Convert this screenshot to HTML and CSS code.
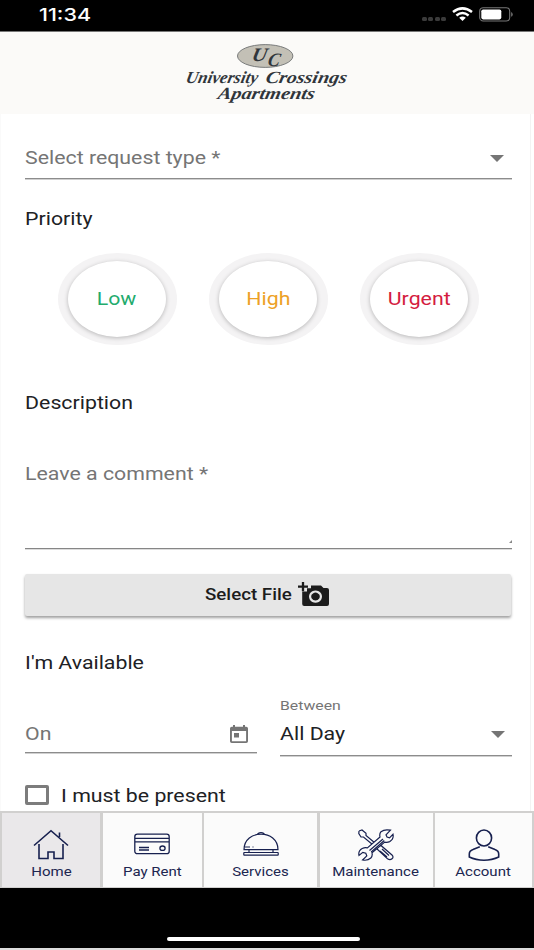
FILE: index.html
```html
<!DOCTYPE html>
<html lang="en">
<head>
<meta charset="utf-8">
<title>Maintenance request</title>
<link rel="stylesheet" href="styles.css">
</head>
<body>
<div class="status">
  <span class="time">11:34</span>
  <div class="signals">
    <div class="dots"><i></i><i></i><i></i><i></i></div>
    <svg class="wifi" viewBox="0 0 21 14" preserveAspectRatio="none"><g fill="none" stroke="#fff" stroke-width="2.5"><path d="M1 5Q10.500-2.300 20 5"/><path d="M4.400 8.400Q10.500 3.600 16.600 8.400"/></g><path d="M7.200 10.700Q10.500 8.300 13.800 10.700L10.500 14Z" fill="#fff"/></svg>
    <svg class="battery" viewBox="0 0 34 15"><rect x=".7" y=".7" width="30" height="13.300" rx="3.500" fill="none" stroke="#777" stroke-width="1.100"/><rect x="2.300" y="2.400" width="20" height="10" rx="1.800" fill="#fff"/><path d="M32.200 5v4.800q1.500-.6 1.500-2.400t-1.500-2.400" fill="#777"/></svg>
  </div>
</div>
<header class="brand">
  <svg class="logo" viewBox="0 0 170 64" role="img" aria-label="University Crossings Apartments">
    <ellipse cx="84.200" cy="16" rx="27.700" ry="11.400" fill="#c3c0b6" stroke="#6d6f70" stroke-width=".9"/>
    <g class="script">
      <text class="initial" transform="translate(70 20.500) skewX(-12)" textLength="15" lengthAdjust="spacingAndGlyphs">U</text>
      <text class="initial" transform="translate(86 25.500) skewX(-12)" textLength="12" lengthAdjust="spacingAndGlyphs">C</text>
      <text transform="translate(4 42.500) skewX(-12)" textLength="72" lengthAdjust="spacingAndGlyphs">University</text>
      <text transform="translate(84 42.500) skewX(-12)" textLength="81" lengthAdjust="spacingAndGlyphs">Crossings</text>
      <text transform="translate(36 58.500) skewX(-12)" textLength="97" lengthAdjust="spacingAndGlyphs">Apartments</text>
    </g>
  </svg>
</header>
<main class="form">
  <div class="field request"><span class="t muted">Select request type *</span><svg class="arrow" viewBox="0 0 14 7"><path d="M0 0h14L7 7z"/></svg></div>
  <h2 class="priority-title"><span class="t">Priority</span></h2>
  <div class="priorities">
    <button class="ring"><span class="disc low"><span class="t mid">Low</span></span></button>
    <button class="ring"><span class="disc high"><span class="t mid">High</span></span></button>
    <button class="ring"><span class="disc urgent"><span class="t mid">Urgent</span></span></button>
  </div>
  <h2 class="description-title"><span class="t">Description</span></h2>
  <div class="comment"><span class="t muted">Leave a comment *</span><svg class="grip" viewBox="0 0 3 3"><path d="M0 3L3 0v3z"/></svg></div>
  <button class="file"><span class="t">Select File</span>
    <svg viewBox="0 0 31 25"><path fill="#1c1c1c" fill-rule="evenodd" d="M4.200 9.500H9V6.300h4V3.500h10L25.500 6H29q2 0 2 2v14q0 2-2 2H6.200q-2 0-2-2zM17.500 8.400a6.500 6.200 0 1 0 .01 0zm0 2.200a4.300 4 0 1 1-.01 0z"/><path d="M5 0v9.300M0 4.600h10" stroke="#1c1c1c" stroke-width="2.300"/></svg>
  </button>
  <h2 class="available-title"><span class="t">I'm Available</span></h2>
  <div class="when">
    <div class="field date"><span class="t muted">On</span>
      <svg class="calendar" viewBox="0 0 18 18" preserveAspectRatio="none"><path fill="#757575" fill-rule="evenodd" d="M3 0h2v1.800h8V0h2v1.800h1.200q1.800 0 1.800 1.800v12.600q0 1.800-1.800 1.800H1.800Q0 18 0 16.200V3.600q0-1.800 1.800-1.800H3zM1.900 6v10.200h14.200V6zM4 8h5v4.500H4z"/></svg></div>
    <div class="between"><span class="t small muted">Between</span>
      <div class="field"><span class="t">All Day</span><svg class="arrow" viewBox="0 0 14 7"><path d="M0 0h14L7 7z"/></svg></div></div>
  </div>
  <label class="present"><span class="box"></span><span class="t">I must be present</span></label>
</main>
<nav class="tabs">
  <a class="tab active"><svg viewBox="0 0 36 32"><path d="M1 16.500L18 1.700 35 16.500M6 15v14.500h9V23h6v6.500h9V15M26.500 8V3.500"/></svg><span>Home</span></a>
  <a class="tab"><svg viewBox="0 0 36 32"><g stroke-width="1.300"><rect x=".8" y="5.200" width="34.400" height="19.500" rx="2.500"/><path d="M1 9.300h34M1 12.800h34M5 18.500h10M5 21h10"/><ellipse cx="28.500" cy="19.200" rx="2.600" ry="2.200"/></g></svg><span>Pay Rent</span></a>
  <a class="tab"><svg viewBox="0 0 36 32"><g stroke-width="1.200"><path d="M1 20.700C1 0 35 0 35 20.700zM15 5.700V4.500q3-2 6 0v1.200M6 20.700v3M30 20.700v3"/><rect x=".8" y="23.500" width="34.400" height="2.700" rx=".5"/><path d="M2 18h5M9.500 18h1"/></g></svg><span>Services</span></a>
  <a class="tab"><svg viewBox="0 0 36 32"><g stroke-width="1.200"><path d="M1 2L4 1 8 4.200V6.500L17 14M14.500 15.500L5.500 8H3L.8 4.500 1 2M20 16.500l3.200.2L34 26q2 2 0 3.800t-4.500 0L19.300 20.300l-.2-2.600zM24 20l7 6.500M22 22l7 6"/><path fill="#fbfbfb" d="M32.500 1.200L28 5.800l1 2.200 2.500.8L35 5.300q1 5-3.300 7.300-2.600 1.200-5 .5L14 23.800q.8 2.900-1.200 5.200-3.200 3-8.200 2l4.200-4.100-1-2.700-3-.8L1 26.500q-1-4.700 3.200-7 2.600-1.200 5.200-.6L22 8q-.8-3 1-5.300Q26.500-.1 32.500 1.200z"/><path d="M11.500 21.500L25 10M13.200 23L26.300 11.500"/></g></svg><span>Maintenance</span></a>
  <a class="tab"><svg viewBox="0 0 36 32"><ellipse cx="18" cy="9" rx="7.600" ry="8"/><path d="M13.800 17.800L7 20.500q-3.700 1.300-3.700 4.500v3Q10 31.200 18 31.200T32.700 28v-3q0-3.200-3.700-4.500l-6.800-2.700"/></svg><span>Account</span></a>
</nav>
<footer class="dock"><span class="indicator"></span></footer>
</body>
</html>
```

FILE: styles.css
```css
* { box-sizing: border-box; }
body { margin: 0; width: 534px; height: 950px; overflow: hidden; background: #fff; color: #202124; font: 17.8px/24px Roboto, sans-serif; display: flex; flex-direction: column; }
button { border: 0; padding: 0; font: inherit; color: inherit; }
svg { display: block; flex: none; }
.t { display: inline-block; white-space: nowrap; transform: translate(.1px, 1px) scaleX(1.198); transform-origin: left center; }
.mid { transform-origin: center; transform: translate(0, .4px) scaleX(1.198); }
.muted { color: #757575; }

.status { height: 32px; flex: none; background: #000; border-bottom: 1px solid #777; display: flex; justify-content: space-between; padding: 0 21px 0 39px; }
.time { color: #fff; font: 500 17.5px/29px Inter, sans-serif; transform: scaleX(1.23); transform-origin: left; }
.signals { display: flex; align-items: flex-start; padding-top: 7px; }
.dots { display: flex; gap: 1.5px; padding-top: 10px; margin-right: 6px; }
.dots i { width: 5px; height: 4px; border-radius: 1.5px; background: #3b3b3b; }
.wifi { width: 21px; height: 14px; margin-right: 6px; }
.battery { width: 34px; height: 15px; }

.brand { height: 82px; flex: none; background: #fbfaf8; display: flex; justify-content: center; padding-top: 8px; }
.logo { width: 170px; height: 64px; overflow: visible; transform: translateX(-1px); }
.script { font: italic 700 17px "Liberation Serif", serif; fill: #30353b; }
.initial { font-size: 19px; }

.form { height: 697px; flex: none; padding: 0 18px 0 24px; margin-right: 3px; border-left: 1px solid #fafafa; border-right: 1px solid #f3f3f3; overflow: hidden; }
.field { display: flex; justify-content: space-between; border-bottom: 1px solid #8c8c8c; box-shadow: 0 1px #d0d0d0; }
.arrow { width: 14px; height: 7px; margin: 10px 7px 0 0; fill: #757575; }
.request { height: 65px; padding-top: 31px; }
.request .arrow { margin-right: 8px; }
h2 { margin: 0; font: inherit; height: 24px; }
.priority-title { margin-top: 27px; }
.priorities { display: flex; gap: 32px; padding-left: 32.500px; margin-top: 23px; }
.ring { width: 119px; height: 92px; flex: none; border-radius: 50%; background: #f4f3f4; display: grid; place-items: center; }
.disc { width: 98px; height: 76px; border-radius: 50%; background: #fff; box-shadow: 0 1px 4px rgba(0,0,0,.25); display: grid; place-items: center; }
.low { color: #23ab6d; }
.high { color: #eda126; }
.urgent { color: #d41c40; }
.description-title { margin-top: 45px; }
.comment { height: 88px; margin-top: 47px; border-bottom: 1px solid #868686; box-shadow: 0 1px #dcdcdc; display: flex; justify-content: space-between; align-items: flex-start; }
.grip { width: 3px; height: 3px; align-self: flex-end; margin-bottom: 5px; fill: #888; }
.file { width: 486px; height: 42px; margin-top: 25px; background: #e6e6e6; border-radius: 2px; box-shadow: 0 2px 3px rgba(0,0,0,.38); display: flex; align-items: flex-start; padding: 8px 0 0 180px; font-weight: 500; font-size: 16px; color: #1c1c1c; }
.file .t { width: 93px; text-align: left; transform: translateY(1px) scaleX(1.17); }
.file svg { width: 31px; height: 25px; }
.available-title { margin-top: 34px; }
.when { display: grid; grid-template-columns: 232px 232px; gap: 22.500px; margin-top: 23px; }
.date { height: 56px; padding-top: 24px; }
.calendar { width: 18px; height: 18px; margin: 4px 9px 0 0; }
.between { height: 58px; }
.between .field { height: 35px; }
.small { font-size: 13.500px; display: block; height: 24px; line-height: 14px; transform: translate(0, 1px) scaleX(1.17); }
.present { display: flex; align-items: center; gap: 12px; margin-top: 28px; height: 24px; }
.box { width: 24px; height: 20px; border: 3px solid #7c7c7c; border-radius: 2px; }

.tabs { height: 77px; flex: none; display: grid; grid-template-columns: 98px 99px 113px 113px 97px; gap: 2.500px; padding: 2px 2px 1px; background: #d1d0cf; }
.tab { background: #fbfbfb; display: flex; flex-direction: column; align-items: center; padding-top: 16px; font-size: 13px; line-height: 18px; color: #202650; }
.tab.active { background: #eae8ea; }
.tab svg { width: 36px; height: 32px; fill: none; stroke: #17204f; stroke-width: 1.600; }
.tab span { margin-top: 2px; transform: scaleX(1.155); }
.dock { height: 62px; flex: none; background: #000; border-bottom: 2px solid #ddd; display: flex; justify-content: center; }
.indicator { width: 193px; height: 4px; margin-top: 49px; margin-right: 7px; border-radius: 2px; background: #fff; }
```
